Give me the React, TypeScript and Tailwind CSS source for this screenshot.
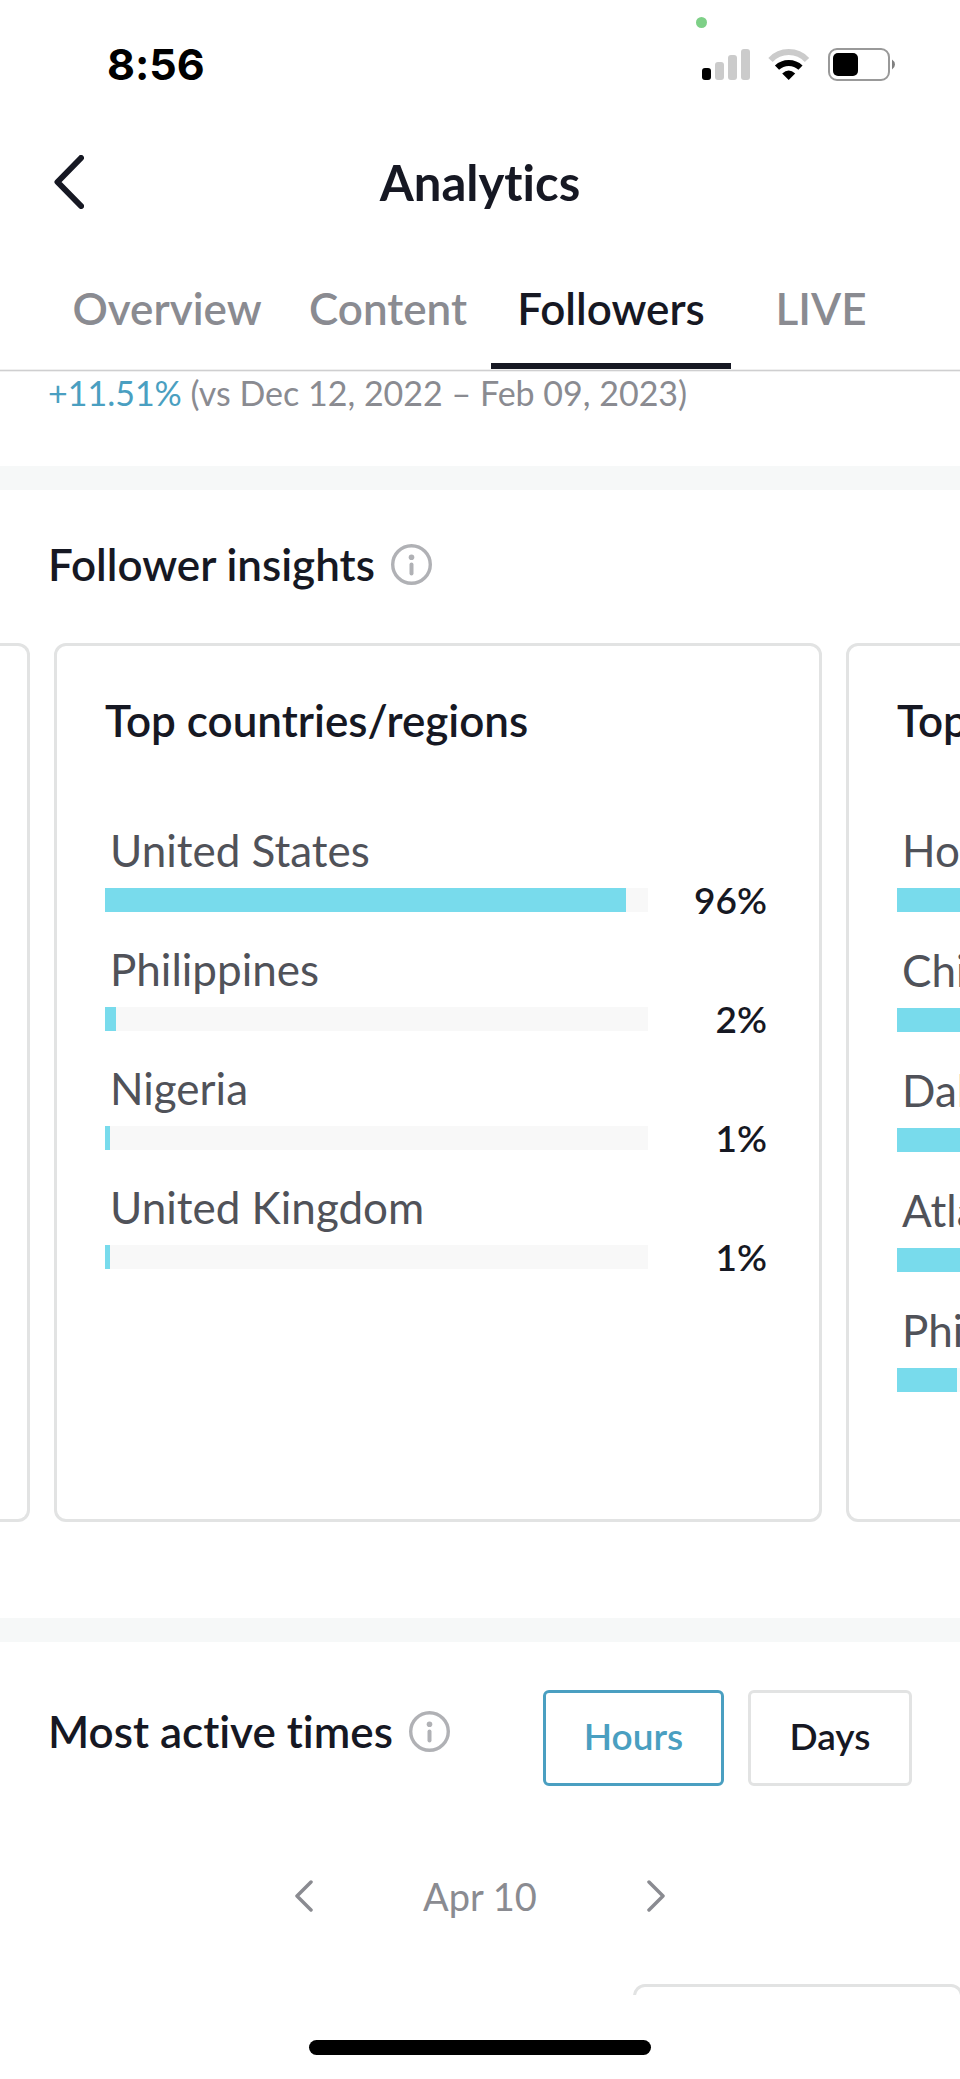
import { useState } from "react";

const tabs = [
  { name: "Overview", width: "w-[236px]" },
  { name: "Content", width: "w-[206px]" },
  { name: "Followers", width: "w-[240px]" },
  { name: "LIVE", width: "w-[180px]" },
];

type Row = { name: string; value: number; label?: string };

const countries: Row[] = [
  { name: "United States", value: 96, label: "96%" },
  { name: "Philippines", value: 2, label: "2%" },
  { name: "Nigeria", value: 1, label: "1%" },
  { name: "United Kingdom", value: 1, label: "1%" },
];

const cities: Row[] = [
  { name: "Houston", value: 30 },
  { name: "Chicago", value: 22 },
  { name: "Dallas", value: 18 },
  { name: "Atlanta", value: 14 },
  { name: "Philadelphia", value: 11 },
];

function StatusBar() {
  return (
    <div className="relative flex h-32 items-center justify-between pl-[107px] pr-16">
      <span className="font-['Inter',sans-serif] text-[43px] leading-none font-bold text-black">8:56</span>
      <span className="absolute top-[17px] right-[253px] h-[11px] w-[11px] rounded-full bg-[#7ed087]" />
      <div className="flex items-center gap-[18px]">
        <svg width="48" height="31" viewBox="0 0 48 31" aria-hidden="true">
          <rect x="0" y="19" width="9" height="12" rx="3" fill="#000" />
          <rect x="13" y="13" width="9" height="18" rx="3" fill="#cbcbcb" />
          <rect x="26" y="6" width="9" height="25" rx="3" fill="#cbcbcb" />
          <rect x="39" y="0" width="9" height="31" rx="3" fill="#cbcbcb" />
        </svg>
        <svg width="42" height="31" viewBox="0 0 42 31" fill="none" aria-hidden="true">
          <path d="M2.5 11A25 25 0 0 1 39 11" stroke="#cbcbcb" strokeWidth="6" />
          <path d="M9 18.7A17 17 0 0 1 32.5 18.7" stroke="#000" strokeWidth="6" />
          <path d="M20.7 31L14.2 24.5Q20.7 18.5 27.2 24.5Z" fill="#000" />
        </svg>
        <svg width="68" height="33" viewBox="0 0 68 33" fill="none" aria-hidden="true">
          <rect x="1" y="1" width="60" height="31" rx="8" stroke="#999" strokeWidth="2" />
          <rect x="5" y="5" width="25" height="23" rx="5" fill="#000" />
          <path d="M64 11.5Q67 13.5 67 16.5T64 21.5Z" fill="#808080" />
        </svg>
      </div>
    </div>
  );
}

function InfoButton({ label }: { label: string }) {
  return (
    <button type="button" aria-label={label}>
      <svg width="41" height="41" viewBox="0 0 41 41" fill="none">
        <circle cx="20.5" cy="20.5" r="18.8" stroke="#b0b1b5" strokeWidth="3.4" />
        <circle cx="20.5" cy="13.3" r="2.8" fill="#b0b1b5" />
        <path d="M20.5 20.5V29.5" stroke="#b0b1b5" strokeWidth="4" strokeLinecap="round" />
      </svg>
    </button>
  );
}

function InsightCard({ title, rows, gap }: { title: string; rows: Row[]; gap: string }) {
  return (
    <article className="h-[879px] w-4/5 shrink-0 rounded-xl border-[3px] border-[#e2e3e3] px-12 pt-[50px]">
      <h3 className="text-[44px] leading-[48px] font-semibold">{title}</h3>
      <ul className={`mt-[82px] flex flex-col ${gap}`}>
        {rows.map((row) => (
          <li key={row.name}>
            <p className="pl-[5px] text-[44px] leading-[48px] text-[#505259]">{row.name}</p>
            <div className="mt-[14px] flex items-center">
              <div className="h-6 flex-1 bg-[#f8f8f8]">
                <div className="h-full bg-[#78dbec]" style={{ width: `${row.value}%` }} />
              </div>
              <span className="w-[123px] pr-1 text-right text-[37px] leading-6 font-semibold">{row.label}</span>
            </div>
          </li>
        ))}
      </ul>
    </article>
  );
}

export default function App() {
  const [tab, setTab] = useState("Followers");
  const [range, setRange] = useState("Hours");

  return (
    <div className="w-full overflow-hidden bg-white font-['Lato',sans-serif] text-[#161823] [font-variant-ligatures:none]">
      <StatusBar />

      {/* Title bar */}
      <header className="grid h-[108px] grid-cols-[1fr_auto_1fr] items-center px-[54px]">
        <button type="button" aria-label="Back" className="justify-self-start">
          <svg width="30" height="54" viewBox="0 0 30 54" fill="none">
            <path d="M27 3L3.5 27L27 51" stroke="#161823" strokeWidth="6" strokeLinecap="round" strokeLinejoin="round" />
          </svg>
        </button>
        <h1 className="text-[49px] leading-[56px] font-bold">Analytics</h1>
      </header>

      {/* Tabs */}
      <nav className="flex justify-center">
        {tabs.map((t) => (
          <button
            key={t.name}
            type="button"
            onClick={() => setTab(t.name)}
            className={`h-[133px] border-b-[6px] pt-4 text-[44px] leading-[48px] font-semibold ${t.width} ${
              tab === t.name ? "border-[#161823] text-[#161823]" : "border-transparent text-[#8a8b91]"
            }`}
          >
            {t.name}
          </button>
        ))}
      </nav>
      <div className="h-[3px] border-y border-[#f0f0f0] bg-[#cfcfd0]" />

      <p className="px-12 pb-[52px] text-[34px] leading-[42px] text-[#8a8b91]">
        <span className="text-[#4a9fc1]">+11.51%</span> (vs Dec 12, 2022 – Feb 09, 2023)
      </p>
      <div className="h-6 bg-[#f6f8f8]" />

      {/* Follower insights */}
      <section className="pb-24">
        <div className="flex items-center gap-4 px-12 pt-[50px] pb-[55px]">
          <h2 className="text-[44px] leading-[48px] font-semibold">Follower insights</h2>
          <InfoButton label="About follower insights" />
        </div>
        <div className="flex gap-6 overflow-hidden">
          <div className="w-[30px] shrink-0 rounded-r-xl border-[3px] border-l-0 border-[#e2e3e3]" />
          <InsightCard title="Top countries/regions" rows={countries} gap="gap-[33px]" />
          <InsightCard title="Top cities" rows={cities} gap="gap-[34px]" />
        </div>
      </section>
      <div className="h-6 bg-[#f6f8f8]" />

      {/* Most active times */}
      <section className="pt-12">
        <div className="flex items-start justify-between px-12">
          <div className="flex items-center gap-4 pt-[17px]">
            <h2 className="text-[44px] leading-[48px] font-semibold">Most active times</h2>
            <InfoButton label="About most active times" />
          </div>
          <div className="flex gap-6 text-[37px] font-semibold">
            <button
              type="button"
              onClick={() => setRange("Hours")}
              className={`h-24 w-[181px] rounded-md border-[3px] pb-1 ${
                range === "Hours" ? "border-[#4a9fc1] text-[#4a9fc1]" : "border-[#e2e3e3]"
              }`}
            >
              Hours
            </button>
            <button
              type="button"
              onClick={() => setRange("Days")}
              className={`h-24 w-[164px] rounded-md border-[3px] pb-1 ${
                range === "Days" ? "border-[#4a9fc1] text-[#4a9fc1]" : "border-[#e2e3e3]"
              }`}
            >
              Days
            </button>
          </div>
        </div>

        <div className="mx-auto mt-20 flex h-[60px] w-[370px] items-center justify-between text-[38px] text-[#8a8b91]">
          <button type="button" aria-label="Previous day">
            <svg width="18" height="32" viewBox="0 0 18 32" fill="none">
              <path d="M16 2L2 16L16 30" stroke="#8a8b91" strokeWidth="3.5" strokeLinecap="round" strokeLinejoin="round" />
            </svg>
          </button>
          <span>Apr 10</span>
          <button type="button" aria-label="Next day">
            <svg width="18" height="32" viewBox="0 0 18 32" fill="none">
              <path d="M2 2L16 16L2 30" stroke="#8a8b91" strokeWidth="3.5" strokeLinecap="round" strokeLinejoin="round" />
            </svg>
          </button>
        </div>

        {/* top edge of the chart's value card */}
        <div className="mt-[58px] h-[11px] overflow-hidden">
          <div className="-mr-[3px] ml-auto h-24 w-[330px] rounded-xl border-[3px] border-[#e2e3e3]" />
        </div>
      </section>

      <div className="pt-[45px] pb-6">
        <div className="mx-auto h-[15px] w-[342px] rounded-full bg-black" />
      </div>
    </div>
  );
}
